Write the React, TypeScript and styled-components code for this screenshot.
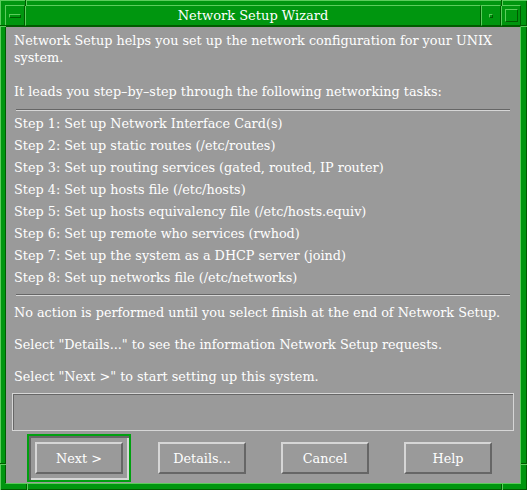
import React from 'react';
import styled, { createGlobalStyle, css } from 'styled-components';

const GlobalStyle = createGlobalStyle`
  html, body { margin: 0; padding: 0; background: #000; }
  body { font-family: "DejaVu Serif", "Liberation Serif", serif; }
`;

const GREEN = '#00960f';
const GREEN_LIGHT = '#5ccc5c';
const GREEN_DARK = '#005c00';
const GRAY = '#9a9a9a';
const GRAY_LIGHT = '#d6d6d6';
const GRAY_DARK = '#666666';

const Frame = styled.div`
  position: relative;
  width: 527px;
  height: 490px;
  box-sizing: border-box;
  padding: 5px 6px 6px 5px;
  background: ${GREEN};
  box-shadow: inset 1px 1px 0 ${GREEN_LIGHT}, inset -1px -1px 0 ${GREEN_DARK};
  display: flex;
  flex-direction: column;
`;

const Notch = styled.div<{ $vertical?: boolean }>`
  position: absolute;
  box-sizing: border-box;
  background: ${GREEN_LIGHT};
  ${(p) =>
    p.$vertical
      ? css`
          width: 2px;
          height: 6px;
          border-left: 1px solid ${GREEN_DARK};
        `
      : css`
          width: 6px;
          height: 2px;
          border-top: 1px solid ${GREEN_DARK};
        `}
`;

const TitleBar = styled.div`
  display: flex;
  height: 21px;
  flex-shrink: 0;
`;

const Raised = css`
  box-sizing: border-box;
  border-top: 1px solid ${GREEN_LIGHT};
  border-left: 1px solid ${GREEN_LIGHT};
  border-bottom: 1px solid ${GREEN_DARK};
  border-right: 1px solid ${GREEN_DARK};
`;

const TitleButton = styled.div`
  ${Raised};
  width: 20px;
  display: flex;
  align-items: center;
  justify-content: center;
`;

const MenuBar = styled.div`
  ${Raised};
  width: 12px;
  height: 4px;
`;

const MinBox = styled.div`
  ${Raised};
  width: 4px;
  height: 4px;
`;

const MaxBox = styled.div`
  ${Raised};
  width: 13px;
  height: 13px;
`;

const Title = styled.div`
  ${Raised};
  flex: 1;
  color: #ffffff;
  font-size: 13px;
  line-height: 19px;
  text-align: center;
`;

const Client = styled.div`
  flex: 1;
  box-sizing: border-box;
  background: ${GRAY};
  border-top: 1px solid ${GREEN_DARK};
  border-left: 1px solid ${GREEN_DARK};
  border-bottom: 1px solid ${GREEN_LIGHT};
  border-right: 1px solid ${GREEN_LIGHT};
  padding: 5px 8px 0 8px;
  color: #ffffff;
  font-size: 12.8px;
  display: flex;
  flex-direction: column;
`;

const Para = styled.p<{ $top?: number }>`
  margin: ${(p) => p.$top ?? 0}px 0 0 0;
  line-height: 17px;
  white-space: nowrap;
`;

const Separator = styled.hr<{ $top: number; $bottom: number }>`
  margin: ${(p) => p.$top}px 2px ${(p) => p.$bottom}px 2px;
  height: 0;
  border: 0;
  border-top: 1px solid ${GRAY_DARK};
  border-bottom: 1px solid ${GRAY_LIGHT};
`;

const StepList = styled.ol`
  list-style: none;
  margin: 0;
  padding: 0;
`;

const Step = styled.li`
  line-height: 22px;
  white-space: nowrap;
`;

const MessageBox = styled.div`
  margin: 8px -2px 0 -2px;
  height: 38px;
  box-sizing: border-box;
  border: 1px solid ${GRAY_LIGHT};
  box-shadow: inset 1px 1px 0 ${GRAY_DARK};
`;

const ButtonRow = styled.div`
  display: flex;
  gap: 19px;
  margin: 3px 0 0 13px;
`;

const Slot = styled.div<{ $default?: boolean }>`
  width: 104px;
  height: 48px;
  box-sizing: border-box;
  padding: 6px;
  border: 2px solid ${(p) => (p.$default ? '#00a010' : 'transparent')};
  ${(p) =>
    p.$default &&
    css`
      box-shadow: inset 2px 2px 0 ${GRAY_DARK}, inset -2px -2px 0 ${GRAY_LIGHT};
    `}
`;

const Button = styled.button`
  width: 88px;
  height: 32px;
  box-sizing: border-box;
  background: ${GRAY};
  color: #ffffff;
  font-family: "DejaVu Serif", "Liberation Serif", serif;
  font-size: 12.8px;
  border-top: 2px solid ${GRAY_LIGHT};
  border-left: 2px solid ${GRAY_LIGHT};
  border-bottom: 2px solid ${GRAY_DARK};
  border-right: 2px solid ${GRAY_DARK};
  padding: 0;
  cursor: pointer;
`;

const steps = [
  'Set up Network Interface Card(s)',
  'Set up static routes (/etc/routes)',
  'Set up routing services (gated, routed, IP router)',
  'Set up hosts file (/etc/hosts)',
  'Set up hosts equivalency file (/etc/hosts.equiv)',
  'Set up remote who services (rwhod)',
  'Set up the system as a DHCP server (joind)',
  'Set up networks file (/etc/networks)',
];

const buttons = ['Next >', 'Details...', 'Cancel', 'Help'];

export default function App() {
  return (
    <>
      <GlobalStyle />
      <Frame>
        <Notch $vertical style={{ left: 25, top: 0 }} />
        <Notch $vertical style={{ left: 501, top: 0 }} />
        <Notch $vertical style={{ left: 26, bottom: 0 }} />
        <Notch $vertical style={{ left: 501, bottom: 0 }} />
        <Notch style={{ left: 0, top: 25 }} />
        <Notch style={{ right: 0, top: 25 }} />
        <Notch style={{ left: 0, top: 463 }} />
        <Notch style={{ right: 0, top: 463 }} />

        <TitleBar>
          <TitleButton>
            <MenuBar />
          </TitleButton>
          <Title>Network Setup Wizard</Title>
          <TitleButton>
            <MinBox />
          </TitleButton>
          <TitleButton>
            <MaxBox />
          </TitleButton>
        </TitleBar>

        <Client>
          <Para>
            Network Setup helps you set up the network configuration for your UNIX
            <br />
            system.
          </Para>
          <Para $top={17}>
            It leads you step&#8211;by&#8211;step through the following networking tasks:
          </Para>
          <Separator $top={9} $bottom={2} />
          <StepList>
            {steps.map((s, i) => (
              <Step key={i}>
                Step {i + 1}: {s}
              </Step>
            ))}
          </StepList>
          <Separator $top={5} $bottom={0} />
          <Para $top={8}>
            No action is performed until you select finish at the end of Network Setup.
          </Para>
          <Para $top={15}>Select "Details..." to see the information Network Setup requests.</Para>
          <Para $top={15}>Select "Next &gt;" to start setting up this system.</Para>
          <MessageBox />
          <ButtonRow>
            {buttons.map((b, i) => (
              <Slot key={b} $default={i === 0}>
                <Button>{b}</Button>
              </Slot>
            ))}
          </ButtonRow>
        </Client>
      </Frame>
    </>
  );
}
